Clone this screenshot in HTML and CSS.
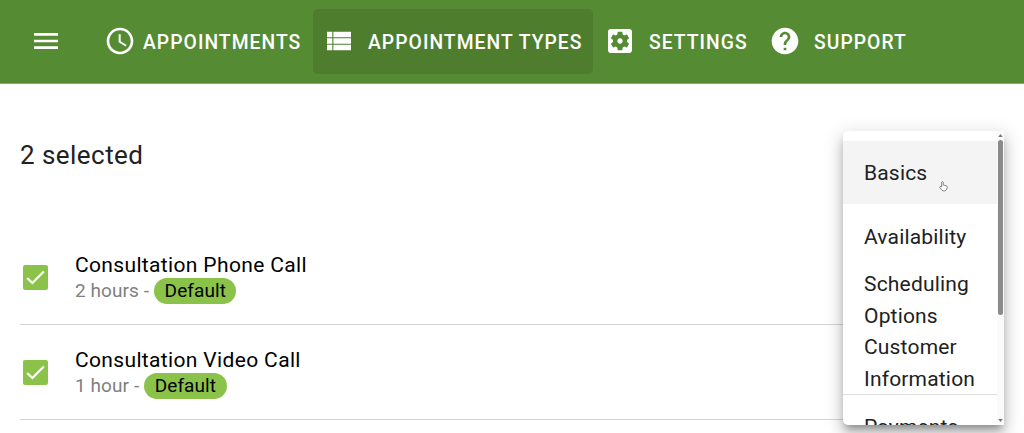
FILE: index.html
```html
<!DOCTYPE html>
<html lang="en">

<head>
  <meta charset="UTF-8" />
  <meta name="viewport" content="width=device-width, initial-scale=1.0" />
  <title>Appointment Types</title>
  <link rel="stylesheet" href="styles.css">
</head>

<body>
  <header class="toolbar">
    <button class="menu-button" aria-label="Menu">
      <svg class="icon" viewBox="0 0 24 24"><path d="M3 18h18v-2H3v2zm0-5h18v-2H3v2zm0-7v2h18V6H3z"/></svg>
    </button>
    <nav class="nav">
      <a class="nav-item nav-appointments" href="#">
        <svg class="icon" viewBox="0 0 24 24"><path d="M11.99 2C6.47 2 2 6.48 2 12s4.47 10 9.99 10C17.52 22 22 17.52 22 12S17.52 2 11.99 2zM12 20c-4.42 0-8-3.58-8-8s3.58-8 8-8 8 3.58 8 8-3.58 8-8 8z"/><path d="M12.5 7H11v6l5.25 3.15.75-1.23-4.5-2.67z"/></svg>
        <span>APPOINTMENTS</span>
      </a>
      <a class="nav-item nav-types active" href="#">
        <svg class="icon" viewBox="0 0 24 24"><path d="M3 9.2h4V5H3v4.2zM3 14.1h4V9.9H3v4.2zM3 19h4v-4.2H3V19zM7.8 19H21v-4.2H7.8V19zM7.8 14.1H21V9.9H7.8v4.2zM7.8 5v4.2H21V5H7.8z"/></svg>
        <span>APPOINTMENT TYPES</span>
      </a>
      <a class="nav-item nav-settings" href="#">
        <svg class="icon" viewBox="0 0 24 24"><path d="M12 10c-1.1 0-2 .9-2 2s.9 2 2 2 2-.9 2-2-.9-2-2-2zm7-7H5c-1.11 0-2 .9-2 2v14c0 1.1.89 2 2 2h14c1.11 0 2-.9 2-2V5c0-1.1-.89-2-2-2zm-1.75 9c0 .23-.02.46-.05.68l1.48 1.16c.13.11.17.3.08.45l-1.4 2.42c-.09.15-.27.21-.43.15l-1.74-.7c-.36.28-.76.51-1.18.69l-.26 1.85c-.03.17-.18.3-.35.3h-2.8c-.17 0-.32-.13-.35-.29l-.26-1.85c-.43-.18-.82-.41-1.18-.69l-1.74.7c-.16.06-.34 0-.43-.15l-1.4-2.42c-.09-.15-.05-.34.08-.45l1.48-1.16c-.03-.23-.05-.46-.05-.69s.02-.46.05-.68l-1.48-1.16c-.13-.11-.17-.3-.08-.45l1.4-2.42c.09-.15.27-.21.43-.15l1.74.7c.36-.28.76-.51 1.18-.69l.26-1.85c.03-.17.18-.3.35-.3h2.8c.17 0 .32.13.35.29l.26 1.85c.43.18.82.41 1.18.69l1.74-.7c.16-.06.34 0 .43.15l1.4 2.42c.09.15.05.34-.08.45l-1.48 1.16c.03.23.05.46.05.69z"/></svg>
        <span>SETTINGS</span>
      </a>
      <a class="nav-item nav-support" href="#">
        <svg class="icon" viewBox="0 0 24 24"><path d="M12 2C6.48 2 2 6.48 2 12s4.48 10 10 10 10-4.48 10-10S17.52 2 12 2zm1 17h-2v-2h2v2zm2.07-7.75l-.9.92C13.45 12.9 13 13.5 13 15h-2v-.5c0-1.1.45-2.1 1.17-2.83l1.24-1.26c.37-.36.59-.86.59-1.41 0-1.1-.9-2-2-2s-2 .9-2 2H8c0-2.21 1.79-4 4-4s4 1.79 4 4c0 .88-.36 1.68-.93 2.25z"/></svg>
        <span>SUPPORT</span>
      </a>
    </nav>
  </header>

  <main class="content">
    <h1 class="selected-count">2 selected</h1>
    <ul class="type-list">
      <li class="type-row">
        <svg class="checkbox" viewBox="0 0 24 24"><rect width="24" height="24" rx="2"/><path d="M4 12.5l5 4.8L20 6.3"/></svg>
        <div class="type-info">
          <div class="type-name">Consultation Phone Call</div>
          <div class="type-meta">2 hours - <span class="badge">Default</span></div>
        </div>
      </li>
      <li class="type-row">
        <svg class="checkbox" viewBox="0 0 24 24"><rect width="24" height="24" rx="2"/><path d="M4 12.5l5 4.8L20 6.3"/></svg>
        <div class="type-info">
          <div class="type-name">Consultation Video Call</div>
          <div class="type-meta">1 hour - <span class="badge">Default</span></div>
        </div>
      </li>
    </ul>
  </main>

  <div class="dropdown">
    <div class="dropdown-list">
      <div class="option hovered">Basics</div>
      <div class="option">Availability</div>
      <div class="option">Scheduling Options</div>
      <div class="option">Customer Information</div>
      <div class="option last">Payments</div>
    </div>
    <div class="scrollbar">
      <svg class="arrow" viewBox="0 0 6 4"><path d="M3 0l3 4H0z"/></svg>
      <div class="track"><div class="thumb"></div></div>
      <svg class="arrow" viewBox="0 0 6 4"><path d="M0 0h6L3 4z"/></svg>
    </div>
    <svg class="pointer" viewBox="0 0 10 12"><path d="M3 7V1.7q.9-1.3 1.7 0V5l3.5.7q1 .3 1 1.3L8.6 9.5Q8 11.4 6 11.4H4.8q-1.2 0-2-1.2L.7 7.3q.2-1.2 1.3-.7z"/></svg>
  </div>
</body>

</html>
```
FILE: styles.css
```css
* {
  box-sizing: border-box;
}

body {
  margin: 0;
  height: 433px;
  overflow: hidden;
  position: relative;
  background: #fff;
  color: #212121;
  font-family: Roboto, "Liberation Sans", sans-serif;
}

.toolbar {
  display: flex;
  align-items: center;
  height: 84px;
  padding: 0 30px 1px;
  border-bottom: 1px solid #86ad6c;
  background: #558b32;
}

.icon {
  flex: none;
  width: 32px;
  height: 32px;
  fill: #fff;
}

.menu-button {
  display: flex;
  padding: 0;
  border: none;
  background: none;
  cursor: pointer;
}

.nav {
  display: flex;
  margin-left: 30px;
}

.nav-item {
  display: flex;
  align-items: center;
  height: 65px;
  border-radius: 5px;
  color: #fff;
  font-size: 19.3px;
  font-weight: 500;
  letter-spacing: 1.05px;
  white-space: nowrap;
  text-decoration: none;
}

.nav-item span {
  padding-top: 2px;
}

.nav-appointments {
  width: 220.5px;
  padding-left: 11.5px;
  gap: 7.5px;
}

.nav-types {
  width: 280.5px;
  padding-left: 10.5px;
  gap: 13px;
}

.nav-settings {
  width: 165px;
  padding-left: 11px;
  gap: 13px;
}

.nav-support {
  padding-left: 11px;
  gap: 13px;
}

.nav-item.active {
  background: #4d7d2d;
}

.content {
  padding: 54px 20px 0;
}

.selected-count {
  margin: 0;
  height: 92px;
  font-size: 26px;
  font-weight: 400;
  line-height: 34px;
  letter-spacing: 0.45px;
}

.type-list {
  margin: 0;
  padding: 0;
  list-style: none;
}

.type-row {
  display: flex;
  align-items: center;
  height: 95px;
  border-bottom: 1px solid #d4d4d4;
}

.checkbox {
  width: 25px;
  height: 25px;
  margin: 0 27px 0 3px;
}

.checkbox rect {
  fill: #8bc34a;
}

.checkbox path {
  fill: none;
  stroke: #fff;
  stroke-width: 2.2;
}

.type-name {
  padding-top: 1px;
  color: #000;
  font-size: 21px;
  line-height: 26px;
  letter-spacing: 0.35px;
}

.type-meta {
  display: flex;
  align-items: center;
  gap: 5px;
  height: 26px;
  color: #808080;
  font-size: 19px;
  letter-spacing: 0.08px;
}

.badge {
  padding: 0 10.5px;
  border-radius: 13px;
  background: #8bc34a;
  color: #000;
  line-height: 26px;
}

/* floating menu */
.dropdown {
  position: absolute;
  top: 131px;
  left: 843px;
  display: flex;
  width: 161px;
  height: 294px;
  border-radius: 5px 0 0 5px;
  overflow: hidden;
  background: #fff;
  box-shadow: 0 6px 7px -3px rgba(0, 0, 0, 0.3), 0 10px 14px 1px rgba(0, 0, 0, 0.14), 0 4px 18px 3px rgba(0, 0, 0, 0.12);
}

.dropdown-list {
  width: 154px;
  padding-top: 10px;
}

.option {
  display: flex;
  align-items: center;
  height: 63.25px;
  padding: 3px 20px 0 21px;
  font-size: 21px;
  line-height: 31.5px;
  letter-spacing: 0.18px;
}

.option.hovered {
  background: #f4f4f4;
}

.option.last {
  padding-top: 4px;
  border-top: 1px solid #dedede;
}

.scrollbar {
  display: flex;
  flex-direction: column;
  align-items: center;
  width: 7px;
  padding: 3px 0;
  background: #fafafa;
}

.arrow {
  width: 5px;
  height: 3px;
  fill: #777;
}

.track {
  flex: 1;
  padding-top: 3px;
}

.thumb {
  width: 5px;
  height: 175px;
  border-radius: 3px;
  background: #8a8a8a;
}

.pointer {
  position: absolute;
  top: 49px;
  left: 96px;
  width: 9px;
  height: 12px;
  fill: #fff;
  stroke: #6a6a75;
  stroke-width: 0.9;
}
```
